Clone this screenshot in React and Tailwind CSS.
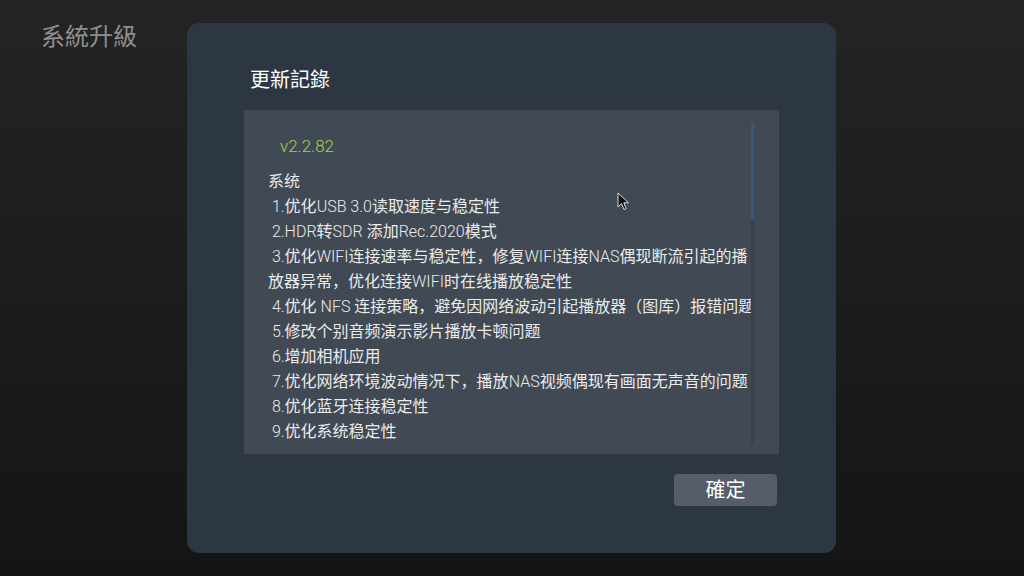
const font = { fontFamily: "Roboto, 'Noto Sans CJK SC', sans-serif" };
const fontTc = { fontFamily: "Roboto, 'Noto Sans CJK TC', sans-serif" };

const lines = [
  " 1.优化USB 3.0读取速度与稳定性",
  " 2.HDR转SDR 添加Rec.2020模式",
  " 3.优化WIFI连接速率与稳定性，修复WIFI连接NAS偶现断流引起的播",
  "放器异常，优化连接WIFI时在线播放稳定性",
  " 4.优化 NFS 连接策略，避免因网络波动引起播放器（图库）报错问题",
  " 5.修改个别音频演示影片播放卡顿问题",
  " 6.增加相机应用",
  " 7.优化网络环境波动情况下，播放NAS视频偶现有画面无声音的问题",
  " 8.优化蓝牙连接稳定性",
  " 9.优化系统稳定性",
];

// latin runs are rendered thinner than the CJK glyphs on the device
function Line({ text }) {
  const parts = text.split(/([A-Za-z0-9 .]+)/).filter(Boolean);
  return (
    <div className="whitespace-pre">
      {parts.map((p, i) =>
        /[A-Za-z0-9]/.test(p) ? (
          <span key={i} className="font-light">
            {p}
          </span>
        ) : (
          <span key={i}>{p}</span>
        )
      )}
    </div>
  );
}

function Cursor() {
  return (
    <svg
      className="absolute left-[373px] top-[82px]"
      width="14"
      height="20"
      viewBox="0 0 14 20"
    >
      <path
        d="M1 1 L1 15 L4.5 11.5 L7 17.5 L9.2 16.6 L6.8 10.8 L11.5 10.8 Z"
        fill="#111"
        stroke="#ddd"
        strokeWidth="1"
        strokeLinejoin="round"
      />
    </svg>
  );
}

export default function App() {
  return (
    <div
      className="w-[1024px] h-[576px] flex overflow-hidden bg-gradient-to-b from-[#242424] to-[#151515]"
      style={font}
    >
      <div className="w-[187px] shrink-0 pl-[41px] pt-[21px]">
        <h1 className="text-[24px] leading-[32px] text-[#8e8e8e]" style={fontTc}>
          系統升級
        </h1>
      </div>

      <div className="mt-[23px] w-[649px] h-[530px] rounded-[12px] bg-[#2c3743] flex flex-col pl-[57px] pr-[57px]">
        <h2
          className="pt-[42px] pl-[6px] text-[20px] leading-[30px] text-white"
          style={fontTc}
        >
          更新記錄
        </h2>

        <div className="relative mt-[15px] w-[535px] h-[344px] bg-[#414a54] pl-[24px] pt-[24px]">
          <div className="pl-[12px] text-[17px] leading-[25px] font-light text-[#9ed64f]">
            v2.2.82
          </div>
          <div className="mt-[10px] text-[16px] leading-[25px] text-[#ebebeb]">
            <div>系统</div>
            {lines.map((l, i) => (
              <Line key={i} text={l} />
            ))}
          </div>

          <div className="absolute left-[507px] top-[12px] w-[3px] h-[323px] rounded-full bg-[#39424c]">
            <div className="w-[3px] h-[98px] rounded-full bg-[#3a5878]" />
          </div>

          <Cursor />
        </div>

        <div className="flex justify-end mt-[20px] mr-[2px]">
          <button className="w-[103px] h-[32px] rounded-[4px] bg-[#545d69] text-white text-[20px] leading-[32px]" style={fontTc}>
            確定
          </button>
        </div>
      </div>
    </div>
  );
}
